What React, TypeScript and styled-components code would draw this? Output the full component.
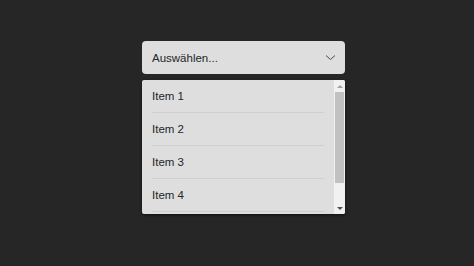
import styled, { createGlobalStyle } from "styled-components";

const GlobalStyle = createGlobalStyle`
  html, body {
    margin: 0;
    padding: 0;
    background: #262626;
  }
  body {
    font-family: "Liberation Sans", Arial, sans-serif;
  }
`;

const Page = styled.div`
  width: 474px;
  height: 266px;
  padding: 41px 0 0 142px;
  box-sizing: border-box;
`;

const Dropdown = styled.div`
  width: 203px;
  display: flex;
  flex-direction: column;
  gap: 6px;
`;

const SelectBox = styled.button`
  height: 33px;
  display: flex;
  align-items: center;
  justify-content: space-between;
  padding: 0 9px 0 10px;
  background: #dedede;
  border: none;
  border-radius: 4px;
  font-family: inherit;
  font-size: 11.5px;
  color: #262626;
  cursor: pointer;
`;

const Chevron = () => (
  <svg width="11" height="7" viewBox="0 0 11 7">
    <path d="M1 1.5 L5.5 5.5 L10 1.5" fill="none" stroke="#4a4a4a" strokeWidth="1" />
  </svg>
);

const List = styled.div`
  height: 134px;
  display: flex;
  background: #dedede;
  border-radius: 2px;
  overflow: hidden;
  box-shadow: 0 1px 3px rgba(0, 0, 0, 0.6);
`;

const Items = styled.ul`
  flex: 1;
  margin: 0;
  padding: 0;
  list-style: none;
  overflow: hidden;
`;

const Item = styled.li`
  height: 32px;
  margin: 0 10px;
  display: flex;
  align-items: center;
  border-bottom: 1px solid #d0d0d0;
  font-size: 11.5px;
  color: #262626;
`;

const Scrollbar = styled.div`
  width: 11px;
  display: flex;
  flex-direction: column;
  background: #f1f1f1;
`;

const Arrow = styled.div<{ $down?: boolean; $color: string }>`
  height: 12px;
  display: flex;
  align-items: center;
  justify-content: center;
  &::after {
    content: "";
    width: 0;
    height: 0;
    border-left: 3px solid transparent;
    border-right: 3px solid transparent;
    ${(p) =>
      p.$down
        ? `border-top: 3px solid ${p.$color};`
        : `border-bottom: 3px solid ${p.$color};`}
  }
`;

const Track = styled.div`
  flex: 1;
  display: flex;
  flex-direction: column;
  padding: 0 1px;
`;

const Thumb = styled.div`
  height: 91px;
  background: #c1c1c1;
`;

const items = ["Item 1", "Item 2", "Item 3", "Item 4"];

export default function App() {
  return (
    <Page>
      <GlobalStyle />
      <Dropdown>
        <SelectBox>
          <span>Auswählen...</span>
          <Chevron />
        </SelectBox>
        <List>
          <Items>
            {items.map((it) => (
              <Item key={it}>{it}</Item>
            ))}
          </Items>
          <Scrollbar>
            <Arrow $color="#a3a3a3" />
            <Track>
              <Thumb />
            </Track>
            <Arrow $down $color="#505050" />
          </Scrollbar>
        </List>
      </Dropdown>
    </Page>
  );
}
